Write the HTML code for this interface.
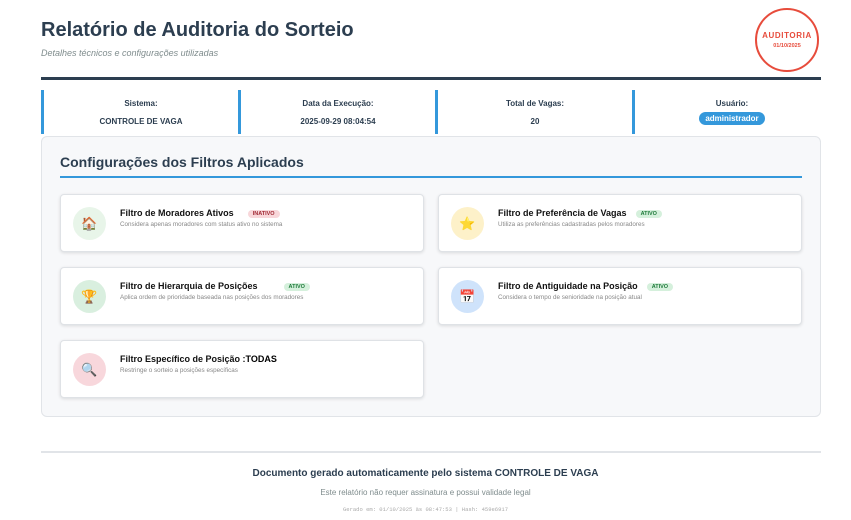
<!DOCTYPE html>
<html><head><meta charset="utf-8"><style>
*{margin:0;padding:0;box-sizing:border-box}
body{width:851px;height:520px;background:#fff;font-family:"Liberation Sans",sans-serif;position:relative;overflow:hidden}
.abs{position:absolute}
h1{position:absolute;left:41px;top:19px;font-size:20px;font-weight:bold;color:#2c3e50}
.sub{left:41px;top:48px;font-size:9px;font-style:italic;color:#7f8c8d}
.stamp{left:755px;top:8px;width:64px;height:64px;border:2.5px solid #e74c3c;border-radius:50%;text-align:center;color:#e74c3c;font-weight:bold}
.bar{left:41px;top:77px;width:780px;height:3px;background:#2c3e50}
.info{top:90px;height:44px;width:197px;border-left:3px solid #3498db;text-align:center;font-size:8px;font-weight:bold;color:#2c3e50}
.info .l{position:absolute;top:9px;width:100%}
.info .v{position:absolute;top:27px;width:100%}
.pill{display:inline-block;background:#3498db;color:#fff;border-radius:8px;padding:2px 6px;font-size:8px}
.panel{left:41px;top:136px;width:780px;height:281px;background:#f7f8fa;border:1px solid #e1e4e8;border-radius:6px}
.ph{left:60px;top:154px;font-size:14px;font-weight:bold;color:#2c3e50}
.pl{left:60px;top:176px;width:742px;height:2px;background:#3498db}
.card{width:364px;height:58px;background:#fff;border:1px solid #dfe2e6;border-radius:4px;box-shadow:0 1px 3px rgba(0,0,0,.12)}
.ic{position:absolute;left:12px;top:12px;width:33px;height:33px;border-radius:50%;display:flex;align-items:center;justify-content:center;font-size:13px}
.t{position:absolute;left:59px;top:13px;font-size:9px;font-weight:bold;color:#111;white-space:nowrap}
.d{position:absolute;left:59px;top:26px;font-size:6.3px;color:#888;white-space:nowrap}
.b{display:inline-block;margin-left:14px;font-size:5.5px;padding:1px 5px;border-radius:6px;vertical-align:1px}
.on{background:#d5f0dc;color:#1e7a3a}.off{background:#f8d7da;color:#a12a35}
.fl{left:41px;top:451px;width:780px;height:2px;background:#e1e4e8}
.c{width:851px;left:10px;text-align:center}
</style></head><body>
<h1>Relatório de Auditoria do Sorteio</h1>
<div class="abs sub">Detalhes técnicos e configurações utilizadas</div>
<div class="abs stamp"><div style="margin-top:21px;font-size:8px;letter-spacing:.6px">AUDITORIA</div><div style="font-size:5.5px;margin-top:3px">01/10/2025</div></div>
<div class="abs bar"></div>
<div class="abs info" style="left:41px"><div class="l">Sistema:</div><div class="v">CONTROLE DE VAGA</div></div>
<div class="abs info" style="left:238px"><div class="l">Data da Execução:</div><div class="v">2025-09-29 08:04:54</div></div>
<div class="abs info" style="left:435px"><div class="l">Total de Vagas:</div><div class="v">20</div></div>
<div class="abs info" style="left:632px"><div class="l">Usuário:</div><div class="v" style="top:22px"><span class="pill">administrador</span></div></div>
<div class="abs panel"></div>
<div class="abs ph">Configurações dos Filtros Aplicados</div>
<div class="abs pl"></div>
<div class="abs card" style="left:60px;top:194px"><div class="ic" style="background:#e8f5e9">🏠</div><div class="t">Filtro de Moradores Ativos<span class="b off">INATIVO</span></div><div class="d">Considera apenas moradores com status ativo no sistema</div></div>
<div class="abs card" style="left:438px;top:194px"><div class="ic" style="background:#fdf1c9">⭐</div><div class="t">Filtro de Preferência de Vagas<span class="b on" style="margin-left:9px">ATIVO</span></div><div class="d">Utiliza as preferências cadastradas pelos moradores</div></div>
<div class="abs card" style="left:60px;top:267px"><div class="ic" style="background:#d9efdf">🏆</div><div class="t">Filtro de Hierarquia de Posições<span class="b on" style="margin-left:26px">ATIVO</span></div><div class="d">Aplica ordem de prioridade baseada nas posições dos moradores</div></div>
<div class="abs card" style="left:438px;top:267px"><div class="ic" style="background:#cfe3fb">📅</div><div class="t">Filtro de Antiguidade na Posição<span class="b on" style="margin-left:9px">ATIVO</span></div><div class="d">Considera o tempo de senioridade na posição atual</div></div>
<div class="abs card" style="left:60px;top:340px"><div class="ic" style="background:#f8d7dc">🔍</div><div class="t">Filtro Específico de Posição :<span style="color:#000">TODAS</span></div><div class="d">Restringe o sorteio a posições específicas</div></div>
<div class="abs fl"></div>
<div class="abs c" style="left:0;top:468px;font-size:10px;font-weight:bold;color:#2c3e50">Documento gerado automaticamente pelo sistema CONTROLE DE VAGA</div>
<div class="abs c" style="left:0;top:488px;font-size:8px;color:#7f8c8d">Este relatório não requer assinatura e possui validade legal</div>
<div class="abs c" style="left:0;top:506px;font-size:5.5px;color:#aaa;font-family:'Liberation Mono',monospace">Gerado em: 01/10/2025 às 08:47:53 | Hash: 459e6917</div>
</body></html>
